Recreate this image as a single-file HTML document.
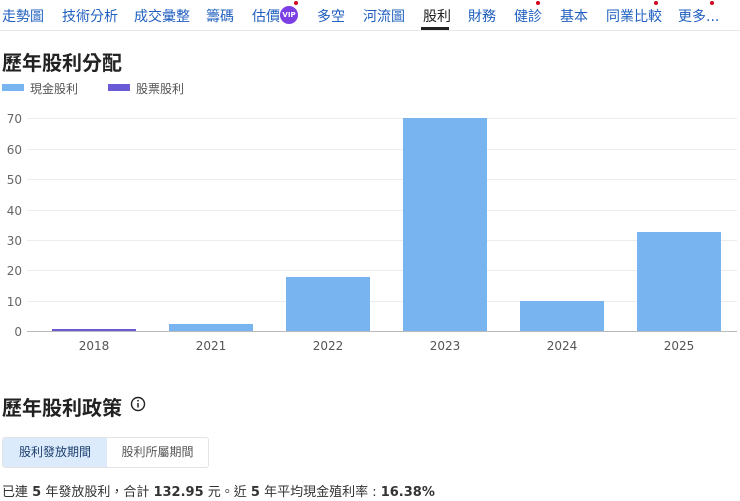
<!DOCTYPE html>
<html><head><meta charset="utf-8"><style>
body{margin:0;width:740px;height:501px;background:#fff;font-family:"DejaVu Sans","Noto Sans CJK TC",sans-serif;position:relative;overflow:hidden;color:#222}
.a{position:absolute;white-space:nowrap}
.nav{font-size:14px;color:#1f5fbf;top:6px}
.dot{position:absolute;width:4px;height:4px;border-radius:50%;background:#d0021b}
</style></head><body>
<div class="a nav" style="left:2px">走勢圖</div>
<div class="a nav" style="left:62px">技術分析</div>
<div class="a nav" style="left:134px">成交彙整</div>
<div class="a nav" style="left:206px">籌碼</div>
<div class="a nav" style="left:252px">估價</div>
<div class="a" style="left:280px;top:6px;width:18px;height:18px;border-radius:50%;background:#7b3fe4;color:#fff;font-size:7px;font-weight:bold;line-height:18px;text-align:center">VIP</div>
<div class="dot" style="left:294px;top:1px"></div>
<div class="a nav" style="left:317px">多空</div>
<div class="a nav" style="left:363px">河流圖</div>
<div class="a nav" style="left:423px;color:#222">股利</div>
<div class="a" style="left:421px;top:27px;width:28px;height:3px;background:#222"></div>
<div class="a nav" style="left:468px">財務</div>
<div class="a nav" style="left:514px">健診</div>
<div class="dot" style="left:536px;top:1px"></div>
<div class="a nav" style="left:560px">基本</div>
<div class="a nav" style="left:606px">同業比較</div>
<div class="dot" style="left:654px;top:1px"></div>
<div class="a nav" style="left:678px">更多...</div>
<div class="dot" style="left:710px;top:1px"></div>
<div class="a" style="left:0;top:30px;width:740px;height:1px;background:#e8e8e8"></div>
<div class="a" style="left:2px;top:47px;font-size:20px;font-weight:bold">歷年股利分配</div>
<div class="a" style="left:2px;top:84px;width:22px;height:7px;background:#78b4f0"></div>
<div class="a" style="left:30px;top:80px;font-size:12px;color:#555">現金股利</div>
<div class="a" style="left:108px;top:84px;width:22px;height:7px;background:#6a5ad6"></div>
<div class="a" style="left:136px;top:80px;font-size:12px;color:#555">股票股利</div>
<svg class="a" style="left:0;top:100px" width="740" height="260">
<g stroke="#ececec" stroke-width="1">
<line x1="27" x2="737" y1="18.5" y2="18.5"/><line x1="27" x2="737" y1="49.5" y2="49.5"/><line x1="27" x2="737" y1="79.5" y2="79.5"/><line x1="27" x2="737" y1="110.5" y2="110.5"/><line x1="27" x2="737" y1="140.5" y2="140.5"/><line x1="27" x2="737" y1="170.5" y2="170.5"/><line x1="27" x2="737" y1="201.5" y2="201.5"/>
</g>
<g font-family="DejaVu Sans,sans-serif" font-size="12" fill="#666" text-anchor="end">
<text x="22" y="23">70</text><text x="22" y="54">60</text><text x="22" y="84">50</text><text x="22" y="115">40</text><text x="22" y="145">30</text><text x="22" y="175">20</text><text x="22" y="206">10</text><text x="22" y="236">0</text>
</g>
<rect x="52" y="229" width="84" height="2" fill="#6a5ad6"/>
<rect x="169" y="224" width="84" height="7" fill="#78b4f0"/>
<rect x="286" y="177" width="84" height="54" fill="#78b4f0"/>
<rect x="403" y="18" width="84" height="213" fill="#78b4f0"/>
<rect x="520" y="201" width="84" height="30" fill="#78b4f0"/>
<rect x="637" y="132" width="84" height="99" fill="#78b4f0"/>
<line x1="27" x2="737" y1="231.5" y2="231.5" stroke="#bbb"/>
<g font-family="DejaVu Sans,sans-serif" font-size="12" fill="#555" text-anchor="middle">
<text x="94" y="250">2018</text><text x="211" y="250">2021</text><text x="328" y="250">2022</text><text x="445" y="250">2023</text><text x="562" y="250">2024</text><text x="679" y="250">2025</text>
</g>
</svg>
<div class="a" style="left:2px;top:392px;font-size:20px;font-weight:bold">歷年股利政策</div>
<svg class="a" style="left:130px;top:396px" width="16" height="16"><circle cx="8" cy="8" r="6.5" fill="none" stroke="#222" stroke-width="1.4"/><line x1="8" y1="7" x2="8" y2="11.5" stroke="#222" stroke-width="1.5"/><circle cx="8" cy="4.8" r="0.9" fill="#222"/></svg>
<div class="a" style="left:2px;top:437px;width:205px;height:29px;border:1px solid #e3e3e3;border-radius:3px;overflow:hidden;font-size:12px">
<div class="a" style="left:0;top:0;width:104px;height:29px;background:#dcebfb;color:#1d3f6e;line-height:29px;text-align:center">股利發放期間</div>
<div class="a" style="left:104px;top:0;width:101px;height:29px;color:#555;line-height:29px;text-align:center">股利所屬期間</div>
</div>
<div class="a" style="left:2px;top:481px;font-size:13px;color:#333">已連 <b>5</b> 年發放股利，合計 <b>132.95</b> 元。近 <b>5</b> 年平均現金殖利率 : <b>16.38%</b></div>
</body></html>
